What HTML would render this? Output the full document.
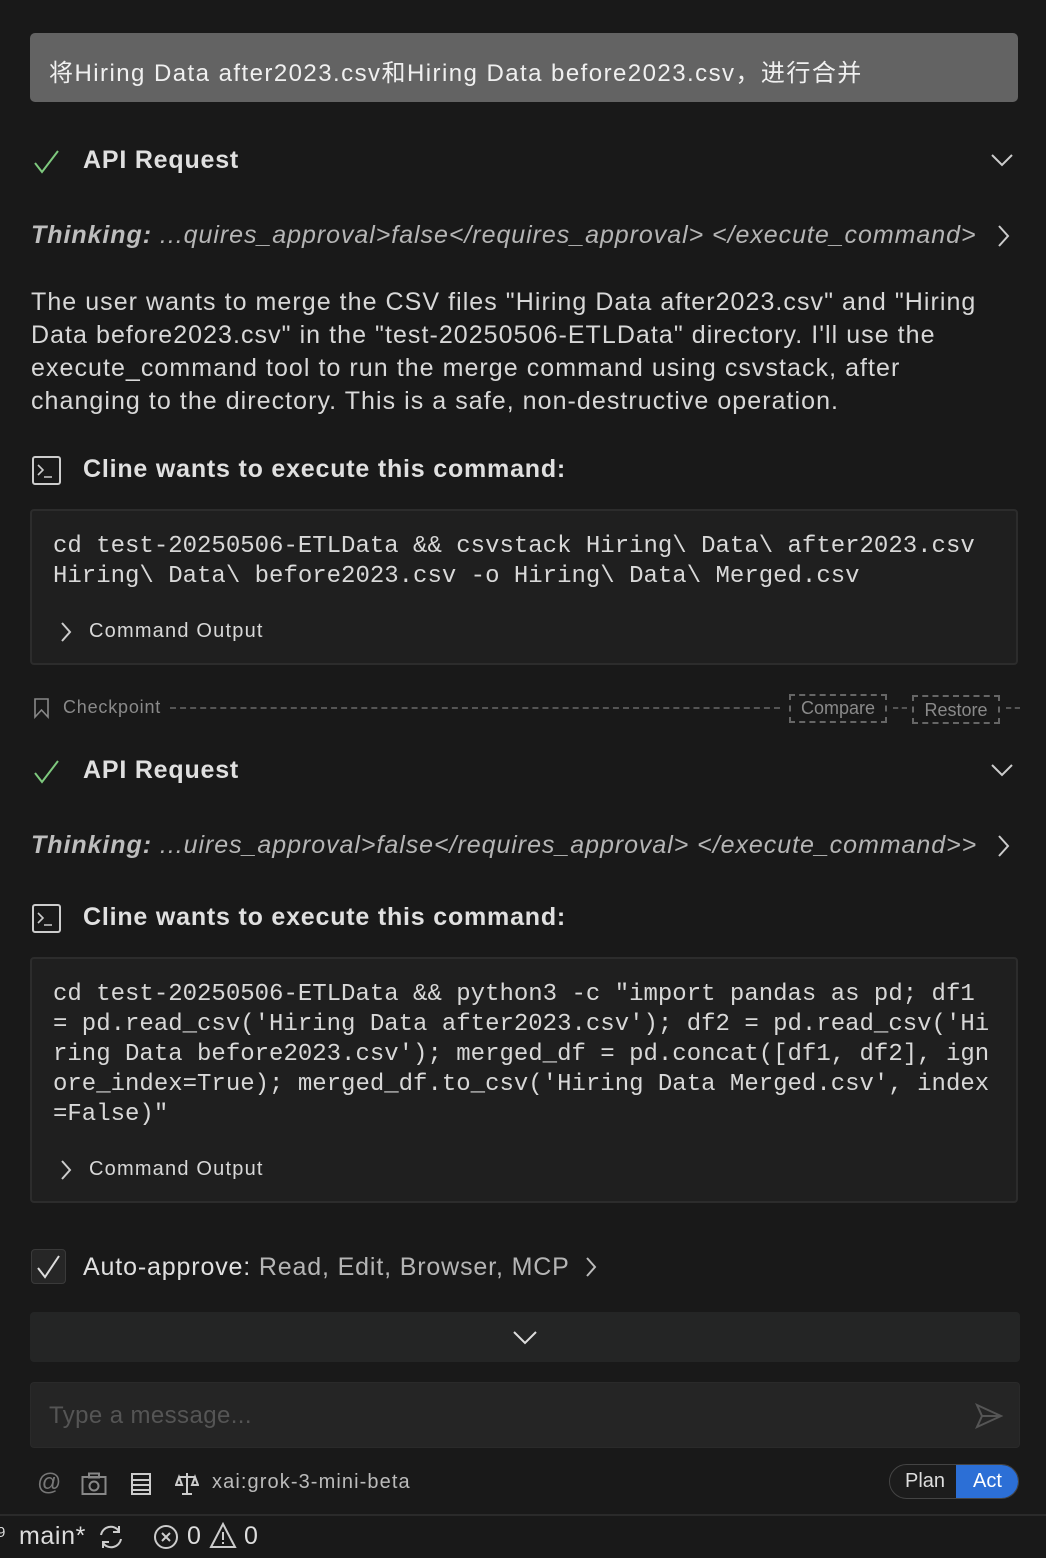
<!DOCTYPE html>
<html><head><meta charset="utf-8"><style>
*{box-sizing:border-box;margin:0;padding:0}
body{width:1046px;height:1558px;background:#191919;color:#d4d4d4;font-family:"Liberation Sans","Noto Sans CJK SC",sans-serif;position:relative;overflow:hidden}
.abs{position:absolute;white-space:nowrap}
.user{left:30px;top:33px;width:988px;height:69px;background:#636363;border-radius:5px;color:#f0f0f0;font-size:24px;padding:20px 0 0 19px;letter-spacing:1.45px}
.h{font-size:25px;font-weight:bold;color:#e0e0e0;letter-spacing:0.8px}
.think{font-size:25px;font-style:italic;color:#b5b5b5;letter-spacing:0.95px}
.think b{color:#bdbdbd}
.p{left:31px;top:286px;width:1000px;font-size:25px;line-height:33px;color:#d8d8d8;letter-spacing:1.05px}
.code{left:30px;width:988px;background:#1f1f1f;border:2px solid #2c2c2c;border-radius:4px}
.mono{font-family:"Liberation Mono",monospace;font-size:24px;line-height:30px;color:#d8d8d8;white-space:pre;position:absolute;left:21px}
.co{position:absolute;left:57px;font-size:20px;color:#d8d8d8;letter-spacing:1.2px;white-space:nowrap}
svg{position:absolute}
</style></head><body>
<div class="abs user">将Hiring Data after2023.csv和Hiring Data before2023.csv，进行合并</div>

<svg style="left:33px;top:148px" width="28" height="28" viewBox="0 0 28 28"><path d="M2 15 L9 24 L25 3" stroke="#7ec97e" stroke-width="2" fill="none"/></svg>
<div class="abs h" style="left:83px;top:146px">API Request</div>
<svg style="left:990px;top:152px" width="24" height="16"><path d="M2 3 L12 13 L22 3" stroke="#ccc" stroke-width="2" fill="none"/></svg>

<div class="abs think" style="left:31px;top:221px"><b>Thinking:</b> ...quires_approval&gt;false&lt;/requires_approval&gt; &lt;/execute_command&gt;</div>
<svg style="left:995px;top:224px" width="16" height="24"><path d="M4 2 L13 12 L4 22" stroke="#ccc" stroke-width="2" fill="none"/></svg>

<div class="abs p">The user wants to merge the CSV files "Hiring Data after2023.csv" and "Hiring<br>Data before2023.csv" in the "test-20250506-ETLData" directory. I'll use the<br>execute_command tool to run the merge command using csvstack, after<br>changing to the directory. This is a safe, non-destructive operation.</div>

<svg style="left:32px;top:456px" width="30" height="30"><rect x="1" y="1" width="27" height="27" rx="2" stroke="#ccc" stroke-width="2" fill="none"/><path d="M6 9 L11 14 L6 19 M12 21 H20" stroke="#ccc" stroke-width="1.6" fill="none"/></svg>
<div class="abs h" style="left:83px;top:455px">Cline wants to execute this command:</div>

<div class="abs code" style="top:509px;height:156px">
<div class="mono" style="top:21px">cd test-20250506-ETLData &amp;&amp; csvstack Hiring\ Data\ after2023.csv
Hiring\ Data\ before2023.csv -o Hiring\ Data\ Merged.csv</div>
<svg style="left:27px;top:110px" width="14" height="22"><path d="M3 2 L11 11 L3 20" stroke="#ccc" stroke-width="2" fill="none"/></svg>
<div class="co" style="top:109px">Command Output</div>
</div>

<svg style="left:33px;top:697px" width="18" height="22"><path d="M2 2 H15 V20 L8.5 13 L2 20 Z" stroke="#888" stroke-width="1.6" fill="none"/></svg>
<div class="abs" style="left:63px;top:697px;font-size:18px;color:#8a8a8a;letter-spacing:0.8px">Checkpoint</div>
<div class="abs" style="left:170px;top:707px;width:610px;border-top:2px dashed #555"></div>
<div class="abs" style="left:789px;top:694px;width:98px;height:29px;border:2px dashed #666;font-size:18px;color:#8a8a8a;text-align:center;line-height:24px">Compare</div>
<div class="abs" style="left:893px;top:707px;width:14px;border-top:2px dashed #555"></div>
<div class="abs" style="left:912px;top:695px;width:88px;height:29px;border:2px dashed #666;font-size:18px;color:#8a8a8a;text-align:center;line-height:26px">Restore</div>
<div class="abs" style="left:1006px;top:707px;width:14px;border-top:2px dashed #555"></div>

<svg style="left:33px;top:758px" width="28" height="28" viewBox="0 0 28 28"><path d="M2 15 L9 24 L25 3" stroke="#7ec97e" stroke-width="2" fill="none"/></svg>
<div class="abs h" style="left:83px;top:756px">API Request</div>
<svg style="left:990px;top:762px" width="24" height="16"><path d="M2 3 L12 13 L22 3" stroke="#ccc" stroke-width="2" fill="none"/></svg>

<div class="abs think" style="left:31px;top:831px"><b>Thinking:</b> ...uires_approval&gt;false&lt;/requires_approval&gt; &lt;/execute_command&gt;&gt;</div>
<svg style="left:995px;top:834px" width="16" height="24"><path d="M4 2 L13 12 L4 22" stroke="#ccc" stroke-width="2" fill="none"/></svg>

<svg style="left:32px;top:904px" width="30" height="30"><rect x="1" y="1" width="27" height="27" rx="2" stroke="#ccc" stroke-width="2" fill="none"/><path d="M6 9 L11 14 L6 19 M12 21 H20" stroke="#ccc" stroke-width="1.6" fill="none"/></svg>
<div class="abs h" style="left:83px;top:903px">Cline wants to execute this command:</div>

<div class="abs code" style="top:957px;height:246px">
<div class="mono" style="top:21px">cd test-20250506-ETLData &amp;&amp; python3 -c "import pandas as pd; df1
= pd.read_csv('Hiring Data after2023.csv'); df2 = pd.read_csv('Hi
ring Data before2023.csv'); merged_df = pd.concat([df1, df2], ign
ore_index=True); merged_df.to_csv('Hiring Data Merged.csv', index
=False)"</div>
<svg style="left:27px;top:200px" width="14" height="22"><path d="M3 2 L11 11 L3 20" stroke="#ccc" stroke-width="2" fill="none"/></svg>
<div class="co" style="top:199px">Command Output</div>
</div>

<div class="abs" style="left:31px;top:1249px;width:35px;height:35px;border-radius:4px;background:#262626;border:1px solid #3a3a3a"></div>
<svg style="left:35px;top:1254px" width="28" height="26"><path d="M3 14 L10 23 L24 2" stroke="#ddd" stroke-width="2" fill="none"/></svg>
<div class="abs" style="left:83px;top:1253px;font-size:25px;color:#e0e0e0;letter-spacing:0.85px">Auto-approve: <span style="color:#b5b5b5">Read, Edit, Browser, MCP</span></div>
<svg style="left:584px;top:1256px" width="14" height="22"><path d="M3 2 L11 11 L3 20" stroke="#bbb" stroke-width="2" fill="none"/></svg>

<div class="abs" style="left:30px;top:1312px;width:990px;height:50px;background:#242525;border-radius:4px"></div>
<svg style="left:512px;top:1330px" width="26" height="16"><path d="M2 2 L13 13 L24 2" stroke="#ddd" stroke-width="2" fill="none"/></svg>

<div class="abs" style="left:30px;top:1382px;width:990px;height:66px;background:#252525;border-radius:4px;border:1px solid #2a2a2a"></div>
<div class="abs" style="left:49px;top:1402px;font-size:24px;color:#555;letter-spacing:0.4px">Type a message...</div>
<svg style="left:974px;top:1402px" width="30" height="28"><path d="M3 3 L27 14 L3 25 L8 14 Z M8 14 H27" stroke="#555" stroke-width="2" fill="none"/></svg>

<div class="abs" style="left:37px;top:1469px;font-size:24px;color:#777">@</div>
<svg style="left:81px;top:1472px" width="26" height="24"><rect x="1.5" y="5" width="23" height="17" stroke="#888" stroke-width="2" fill="none"/><rect x="8" y="1.5" width="10" height="4" stroke="#888" stroke-width="2" fill="none"/><circle cx="13" cy="14" r="4.5" stroke="#888" stroke-width="2" fill="none"/></svg>
<svg style="left:130px;top:1472px" width="22" height="24"><rect x="2" y="2" width="18" height="20" stroke="#ccc" stroke-width="2" fill="none"/><path d="M2 8 H20 M2 13 H20 M2 18 H20" stroke="#ccc" stroke-width="2"/></svg>
<svg style="left:175px;top:1471px" width="24" height="26"><path d="M12 2 V22 M4 6 H20 M4 6 L1 14 H7 Z M20 6 L17 14 H23 Z M7 23 H17" stroke="#ccc" stroke-width="2" fill="none"/></svg>
<div class="abs" style="left:212px;top:1471px;font-size:20px;color:#bbb;letter-spacing:1.1px">xai:grok-3-mini-beta</div>

<div class="abs" style="left:889px;top:1464px;width:130px;height:35px;border:1px solid #444;border-radius:18px;overflow:hidden;background:#1c1c1c">
<div class="abs" style="left:15px;top:5px;font-size:20px;color:#ddd">Plan</div>
<div class="abs" style="left:66px;top:0;width:64px;height:35px;background:#2c6fd6;color:#fff;font-size:20px;padding:5px 0 0 17px">Act</div>
</div>

<div class="abs" style="left:0;top:1514px;width:1046px;height:2px;background:#2a2a2a"></div>
<div class="abs" style="left:-4px;top:1522px;font-size:24px;color:#ddd">⁹</div>
<div class="abs" style="left:19px;top:1522px;font-size:25px;color:#ddd;letter-spacing:0.6px">main*</div>
<svg style="left:97px;top:1523px" width="28" height="28"><path d="M4 12 A10 10 0 0 1 22 8 M24 16 A10 10 0 0 1 6 20 M22 3 V9 H16 M6 25 V19 H12" stroke="#ccc" stroke-width="2" fill="none"/></svg>
<svg style="left:153px;top:1523px" width="28" height="28"><circle cx="13" cy="14" r="11" stroke="#ccc" stroke-width="2" fill="none"/><path d="M9 10 L17 18 M17 10 L9 18" stroke="#ccc" stroke-width="2"/></svg>
<div class="abs" style="left:187px;top:1522px;font-size:25px;color:#ddd">0</div>
<svg style="left:209px;top:1522px" width="28" height="28"><path d="M14 2 L26 25 H2 Z M14 10 V18 M14 20 V22" stroke="#ccc" stroke-width="2" fill="none"/></svg>
<div class="abs" style="left:244px;top:1522px;font-size:25px;color:#ddd">0</div>
</body></html>
